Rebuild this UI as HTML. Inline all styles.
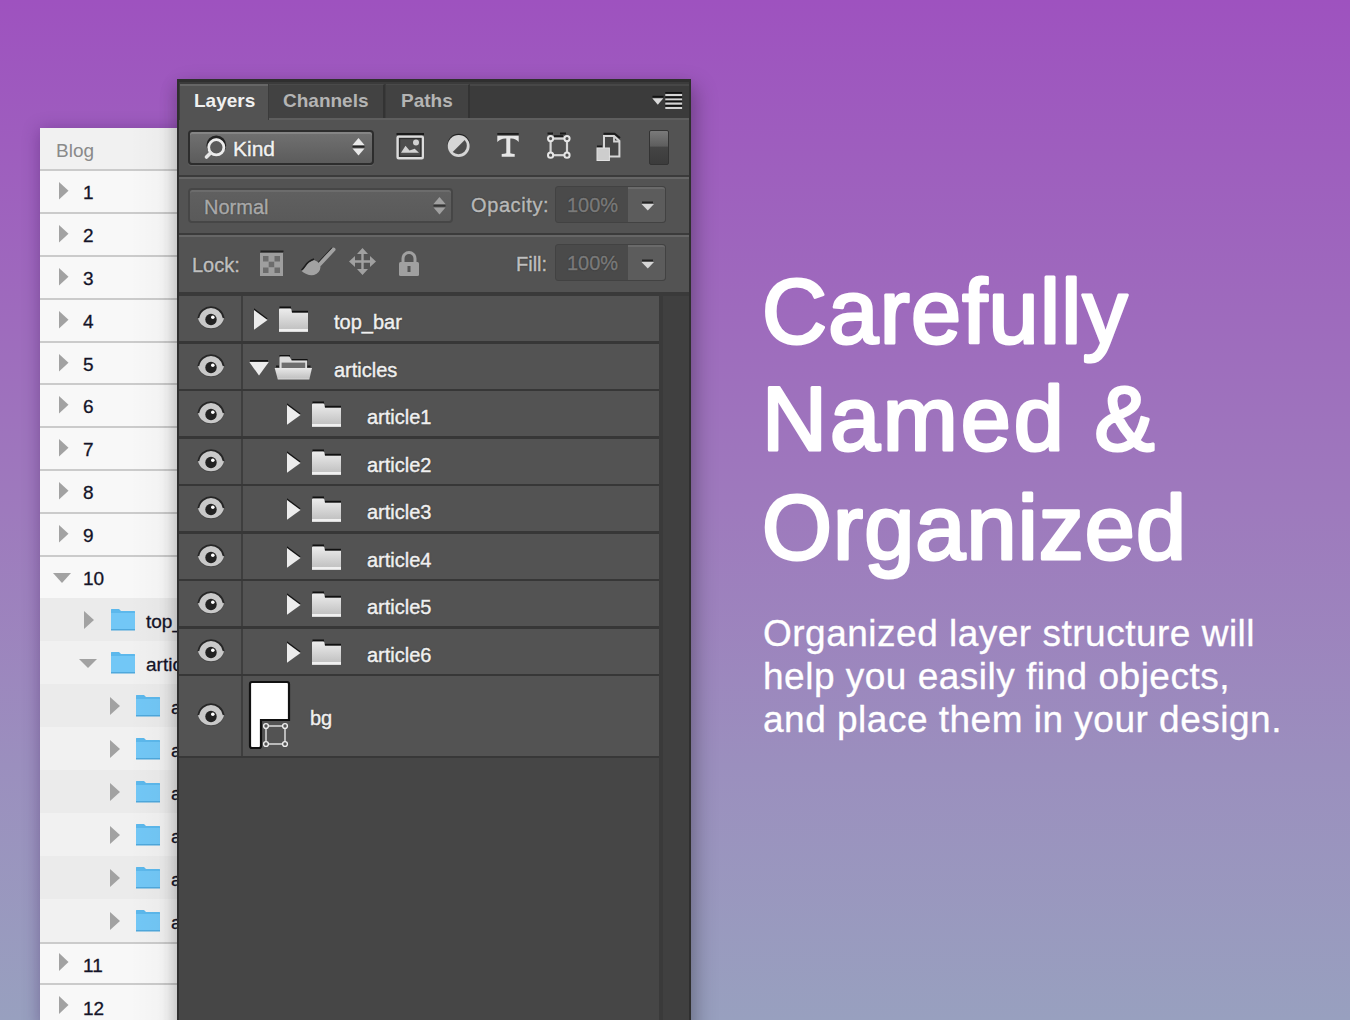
<!DOCTYPE html><html><head><meta charset="utf-8"><style>
*{margin:0;padding:0;box-sizing:border-box}
html,body{width:1350px;height:1020px;overflow:hidden}
body{position:relative;font-family:"Liberation Sans",sans-serif;
background:linear-gradient(to bottom,#9e52bf 0%,#9e6abd 30%,#9e7abd 50%,#9b8fbe 75%,#98a0bf 100%)}
div,span{position:absolute}
svg{position:absolute;overflow:visible}
.t{white-space:nowrap;line-height:1}
.pt{-webkit-text-stroke:0.45px currentColor;text-shadow:0 0 1.5px rgba(0,0,0,.7)}
</style></head><body>
<div style="left:40px;top:128px;width:150px;height:900px;background:#f8f8f8;box-shadow:0 2px 16px rgba(50,10,80,.35)"></div>
<div style="left:40px;top:128px;width:150px;height:41px;background:#f1f1f1"></div>
<span class="t" style="left:56px;top:141px;font-size:19px;color:#8a8a8a">Blog</span>
<div style="left:40px;top:169px;width:150px;height:2px;background:#cbcbcb"></div>
<svg style="left:59px;top:182px" width="9.5" height="17.5"><path d="M0 0L9.5 8.75L0 17.5Z" fill="#a2a2a2"/></svg>
<span class="t" style="left:83px;top:183px;font-size:19px;color:#141428;-webkit-text-stroke:0.3px #141428">1</span>
<div style="left:40px;top:212px;width:150px;height:2px;background:#cbcbcb"></div>
<svg style="left:59px;top:225px" width="9.5" height="17.5"><path d="M0 0L9.5 8.75L0 17.5Z" fill="#a2a2a2"/></svg>
<span class="t" style="left:83px;top:226px;font-size:19px;color:#141428;-webkit-text-stroke:0.3px #141428">2</span>
<div style="left:40px;top:255px;width:150px;height:2px;background:#cbcbcb"></div>
<svg style="left:59px;top:268px" width="9.5" height="17.5"><path d="M0 0L9.5 8.75L0 17.5Z" fill="#a2a2a2"/></svg>
<span class="t" style="left:83px;top:269px;font-size:19px;color:#141428;-webkit-text-stroke:0.3px #141428">3</span>
<div style="left:40px;top:298px;width:150px;height:2px;background:#cbcbcb"></div>
<svg style="left:59px;top:311px" width="9.5" height="17.5"><path d="M0 0L9.5 8.75L0 17.5Z" fill="#a2a2a2"/></svg>
<span class="t" style="left:83px;top:312px;font-size:19px;color:#141428;-webkit-text-stroke:0.3px #141428">4</span>
<div style="left:40px;top:341px;width:150px;height:2px;background:#cbcbcb"></div>
<svg style="left:59px;top:354px" width="9.5" height="17.5"><path d="M0 0L9.5 8.75L0 17.5Z" fill="#a2a2a2"/></svg>
<span class="t" style="left:83px;top:355px;font-size:19px;color:#141428;-webkit-text-stroke:0.3px #141428">5</span>
<div style="left:40px;top:383px;width:150px;height:2px;background:#cbcbcb"></div>
<svg style="left:59px;top:396px" width="9.5" height="17.5"><path d="M0 0L9.5 8.75L0 17.5Z" fill="#a2a2a2"/></svg>
<span class="t" style="left:83px;top:397px;font-size:19px;color:#141428;-webkit-text-stroke:0.3px #141428">6</span>
<div style="left:40px;top:426px;width:150px;height:2px;background:#cbcbcb"></div>
<svg style="left:59px;top:439px" width="9.5" height="17.5"><path d="M0 0L9.5 8.75L0 17.5Z" fill="#a2a2a2"/></svg>
<span class="t" style="left:83px;top:440px;font-size:19px;color:#141428;-webkit-text-stroke:0.3px #141428">7</span>
<div style="left:40px;top:469px;width:150px;height:2px;background:#cbcbcb"></div>
<svg style="left:59px;top:482px" width="9.5" height="17.5"><path d="M0 0L9.5 8.75L0 17.5Z" fill="#a2a2a2"/></svg>
<span class="t" style="left:83px;top:483px;font-size:19px;color:#141428;-webkit-text-stroke:0.3px #141428">8</span>
<div style="left:40px;top:512px;width:150px;height:2px;background:#cbcbcb"></div>
<svg style="left:59px;top:525px" width="9.5" height="17.5"><path d="M0 0L9.5 8.75L0 17.5Z" fill="#a2a2a2"/></svg>
<span class="t" style="left:83px;top:526px;font-size:19px;color:#141428;-webkit-text-stroke:0.3px #141428">9</span>
<div style="left:40px;top:555px;width:150px;height:2px;background:#cbcbcb"></div>
<svg style="left:53px;top:573px" width="18" height="10"><path d="M0 0L18 0L9.0 10Z" fill="#a2a2a2"/></svg>
<span class="t" style="left:83px;top:569px;font-size:19px;color:#141428;-webkit-text-stroke:0.3px #141428">10</span>
<div style="left:40px;top:598px;width:150px;height:43px;background:#ebebeb"></div>
<svg style="left:84px;top:611px" width="10" height="18"><path d="M0 0L10 9.0L0 18Z" fill="#a2a2a2"/></svg>
<svg style="left:110px;top:608px" width="26" height="23" viewBox="0 0 26 23"><path d="M1 1.5Q1 1 1.5 1H9L11 3H24.5Q25 3 25 3.5V22H1Z" fill="#5cb8ec"/><path d="M1 5H25V21.5Q25 22 24.5 22H1.5Q1 22 1 21.5Z" fill="#72c7f6"/><rect x="1" y="21" width="24" height="1.5" fill="#4fa8dc"/></svg>
<span class="t" style="left:146px;top:612px;font-size:19px;color:#141428;-webkit-text-stroke:0.3px #141428">top_</span>
<div style="left:40px;top:641px;width:150px;height:43px;background:#f1f1f1"></div>
<svg style="left:79px;top:659px" width="18" height="9"><path d="M0 0L18 0L9.0 9Z" fill="#a2a2a2"/></svg>
<svg style="left:110px;top:651px" width="26" height="23" viewBox="0 0 26 23"><path d="M1 1.5Q1 1 1.5 1H9L11 3H24.5Q25 3 25 3.5V22H1Z" fill="#5cb8ec"/><path d="M1 5H25V21.5Q25 22 24.5 22H1.5Q1 22 1 21.5Z" fill="#72c7f6"/><rect x="1" y="21" width="24" height="1.5" fill="#4fa8dc"/></svg>
<span class="t" style="left:146px;top:655px;font-size:19px;color:#141428;-webkit-text-stroke:0.3px #141428">artic</span>
<div style="left:40px;top:684px;width:150px;height:43px;background:#ebebeb"></div>
<svg style="left:110px;top:697px" width="10" height="18"><path d="M0 0L10 9.0L0 18Z" fill="#a2a2a2"/></svg>
<svg style="left:135px;top:694px" width="26" height="23" viewBox="0 0 26 23"><path d="M1 1.5Q1 1 1.5 1H9L11 3H24.5Q25 3 25 3.5V22H1Z" fill="#5cb8ec"/><path d="M1 5H25V21.5Q25 22 24.5 22H1.5Q1 22 1 21.5Z" fill="#72c7f6"/><rect x="1" y="21" width="24" height="1.5" fill="#4fa8dc"/></svg>
<span class="t" style="left:171px;top:698px;font-size:19px;color:#141428;-webkit-text-stroke:0.3px #141428">a</span>
<div style="left:40px;top:727px;width:150px;height:43px;background:#f1f1f1"></div>
<svg style="left:110px;top:740px" width="10" height="18"><path d="M0 0L10 9.0L0 18Z" fill="#a2a2a2"/></svg>
<svg style="left:135px;top:737px" width="26" height="23" viewBox="0 0 26 23"><path d="M1 1.5Q1 1 1.5 1H9L11 3H24.5Q25 3 25 3.5V22H1Z" fill="#5cb8ec"/><path d="M1 5H25V21.5Q25 22 24.5 22H1.5Q1 22 1 21.5Z" fill="#72c7f6"/><rect x="1" y="21" width="24" height="1.5" fill="#4fa8dc"/></svg>
<span class="t" style="left:171px;top:741px;font-size:19px;color:#141428;-webkit-text-stroke:0.3px #141428">a</span>
<div style="left:40px;top:770px;width:150px;height:43px;background:#ebebeb"></div>
<svg style="left:110px;top:783px" width="10" height="18"><path d="M0 0L10 9.0L0 18Z" fill="#a2a2a2"/></svg>
<svg style="left:135px;top:780px" width="26" height="23" viewBox="0 0 26 23"><path d="M1 1.5Q1 1 1.5 1H9L11 3H24.5Q25 3 25 3.5V22H1Z" fill="#5cb8ec"/><path d="M1 5H25V21.5Q25 22 24.5 22H1.5Q1 22 1 21.5Z" fill="#72c7f6"/><rect x="1" y="21" width="24" height="1.5" fill="#4fa8dc"/></svg>
<span class="t" style="left:171px;top:784px;font-size:19px;color:#141428;-webkit-text-stroke:0.3px #141428">a</span>
<div style="left:40px;top:813px;width:150px;height:43px;background:#f1f1f1"></div>
<svg style="left:110px;top:826px" width="10" height="18"><path d="M0 0L10 9.0L0 18Z" fill="#a2a2a2"/></svg>
<svg style="left:135px;top:823px" width="26" height="23" viewBox="0 0 26 23"><path d="M1 1.5Q1 1 1.5 1H9L11 3H24.5Q25 3 25 3.5V22H1Z" fill="#5cb8ec"/><path d="M1 5H25V21.5Q25 22 24.5 22H1.5Q1 22 1 21.5Z" fill="#72c7f6"/><rect x="1" y="21" width="24" height="1.5" fill="#4fa8dc"/></svg>
<span class="t" style="left:171px;top:827px;font-size:19px;color:#141428;-webkit-text-stroke:0.3px #141428">a</span>
<div style="left:40px;top:856px;width:150px;height:43px;background:#ebebeb"></div>
<svg style="left:110px;top:869px" width="10" height="18"><path d="M0 0L10 9.0L0 18Z" fill="#a2a2a2"/></svg>
<svg style="left:135px;top:866px" width="26" height="23" viewBox="0 0 26 23"><path d="M1 1.5Q1 1 1.5 1H9L11 3H24.5Q25 3 25 3.5V22H1Z" fill="#5cb8ec"/><path d="M1 5H25V21.5Q25 22 24.5 22H1.5Q1 22 1 21.5Z" fill="#72c7f6"/><rect x="1" y="21" width="24" height="1.5" fill="#4fa8dc"/></svg>
<span class="t" style="left:171px;top:870px;font-size:19px;color:#141428;-webkit-text-stroke:0.3px #141428">a</span>
<div style="left:40px;top:899px;width:150px;height:43px;background:#f1f1f1"></div>
<svg style="left:110px;top:912px" width="10" height="18"><path d="M0 0L10 9.0L0 18Z" fill="#a2a2a2"/></svg>
<svg style="left:135px;top:909px" width="26" height="23" viewBox="0 0 26 23"><path d="M1 1.5Q1 1 1.5 1H9L11 3H24.5Q25 3 25 3.5V22H1Z" fill="#5cb8ec"/><path d="M1 5H25V21.5Q25 22 24.5 22H1.5Q1 22 1 21.5Z" fill="#72c7f6"/><rect x="1" y="21" width="24" height="1.5" fill="#4fa8dc"/></svg>
<span class="t" style="left:171px;top:913px;font-size:19px;color:#141428;-webkit-text-stroke:0.3px #141428">a</span>
<div style="left:40px;top:942px;width:150px;height:2px;background:#cbcbcb"></div>
<svg style="left:59px;top:953px" width="9.5" height="18"><path d="M0 0L9.5 9.0L0 18Z" fill="#a2a2a2"/></svg>
<span class="t" style="left:83px;top:956px;font-size:19px;color:#141428;-webkit-text-stroke:0.3px #141428">11</span>
<div style="left:40px;top:983px;width:150px;height:2px;background:#cbcbcb"></div>
<svg style="left:59px;top:996px" width="9.5" height="18"><path d="M0 0L9.5 9.0L0 18Z" fill="#a2a2a2"/></svg>
<span class="t" style="left:83px;top:999px;font-size:19px;color:#141428;-webkit-text-stroke:0.3px #141428">12</span>
<div style="left:130px;top:128px;width:47px;height:900px;background:linear-gradient(to right,rgba(0,0,0,0),rgba(0,0,0,.03))"></div>
<div style="left:177px;top:79px;width:514px;height:960px;background:#2f2f2f;box-shadow:5px 8px 20px rgba(0,0,0,.27),-4px 6px 14px rgba(0,0,0,.1)"></div>
<div style="left:179px;top:82px;width:510px;height:38px;background:#3b3b3b"></div>
<div style="left:179px;top:120px;width:510px;height:900px;background:#535353"></div>
<div style="left:180px;top:84px;width:88px;height:37px;background:#535353;border-top:2px solid #666"></div>
<div style="left:269px;top:84px;width:116px;height:34px;background:#424242;border-top:1px solid #4a4a4a;border-right:2px solid #333"></div>
<div style="left:386px;top:84px;width:84px;height:34px;background:#424242;border-top:1px solid #4a4a4a;border-right:2px solid #333"></div>
<div style="left:269px;top:118px;width:420px;height:2px;background:#5e5e5e"></div>
<span class="t" style="left:194px;top:91px;font-size:19px;font-weight:bold;color:#f0f0f0">Layers</span>
<span class="t" style="left:283px;top:91px;font-size:19px;font-weight:bold;color:#b4b4b4">Channels</span>
<span class="t" style="left:401px;top:91px;font-size:19px;font-weight:bold;color:#b4b4b4">Paths</span>
<div style="left:470px;top:84px;width:219px;height:2px;background:#474747"></div>
<svg style="left:650px;top:90px" width="36" height="22" viewBox="0 0 36 22"><rect x="2.5" y="5.8" width="11" height="1.7" fill="#111"/><path d="M2.3 8.3H13.3L7.8 14.8Z" fill="#dadada"/><rect x="15.3" y="2" width="16.8" height="1.6" fill="#111"/><rect x="15.3" y="4" width="16.8" height="2" fill="#d4d4d4"/><rect x="15.3" y="6.5" width="16.8" height="1.6" fill="#111"/><rect x="15.3" y="8.5" width="16.8" height="2" fill="#d4d4d4"/><rect x="15.3" y="10.6" width="16.8" height="1.6" fill="#111"/><rect x="15.3" y="12.6" width="16.8" height="2" fill="#d4d4d4"/><rect x="15.3" y="15" width="16.8" height="1.6" fill="#111"/><rect x="15.3" y="17" width="16.8" height="2" fill="#d4d4d4"/></svg>
<div style="left:179px;top:174.5px;width:510px;height:2px;background:#3b3b3b"></div>
<div style="left:179px;top:176.5px;width:510px;height:2px;background:#666"></div>
<div style="left:179px;top:232.5px;width:510px;height:2px;background:#3b3b3b"></div>
<div style="left:179px;top:234.5px;width:510px;height:2px;background:#666"></div>
<div style="left:188px;top:130px;width:186px;height:35px;border-radius:4px;background:linear-gradient(#717171,#5c5c5c);border:2px solid #2d2d2d;box-shadow:0 1px 0 #666,inset 0 2px 0 #858585"></div>
<svg style="left:200px;top:132px" width="30" height="30" viewBox="0 0 30 30"><circle cx="16.3" cy="14.3" r="8.6" fill="none" stroke="#222" stroke-width="2.6" transform="translate(0,-1)"/><circle cx="16.3" cy="15.3" r="7.6" fill="#5a5a5a" stroke="#ececec" stroke-width="2.8"/><path d="M10.5 21L6.5 25" stroke="#e6e6e6" stroke-width="3.6" stroke-linecap="round"/></svg>
<span class="t pt" style="left:233px;top:137.5px;font-size:21px;color:#f2f2f2">Kind</span>
<svg style="left:352px;top:137px" width="13" height="20"><path d="M6.5 1L12.5 8H0.5Z" fill="#e8e8e8"/><rect x="0.5" y="9" width="12" height="1.6" fill="#222"/><path d="M0.5 11.5H12.5L6.5 18.5Z" fill="#e8e8e8"/></svg>
<svg style="left:390px;top:128px" width="40" height="36" viewBox="0 0 40 36"><rect x="6.5" y="5" width="27.5" height="2" fill="#1a1a1a"/><rect x="7.6" y="8.6" width="25.2" height="21.6" rx="1" fill="#4e4e4e" stroke="#dcdcdc" stroke-width="2.4"/><rect x="9.6" y="10.6" width="21.2" height="17.6" fill="none" stroke="#2e2e2e" stroke-width="1.2"/><path d="M11 24.7L15.5 17.7L19.5 22.5L24.7 20.8L29 24.7Z" fill="#d2d2d2"/><circle cx="26" cy="14.5" r="3" fill="#d2d2d2"/></svg>
<svg style="left:440px;top:128px" width="40" height="36" viewBox="0 0 40 36"><circle cx="18.7" cy="17" r="11.2" fill="#222"/><circle cx="18.7" cy="18" r="11" fill="#d6d6d6"/><path d="M24.7 12L12.7 24A8.5 8.5 0 0 0 24.7 12Z" fill="#4e4e4e"/></svg>
<svg style="left:497px;top:133px" width="23" height="25" viewBox="0 0 23 25"><rect x="0.3" y="0" width="21.4" height="1.8" fill="#1a1a1a"/><path d="M0.3 2.7H21.7V9Q18.5 5 13.3 5.5V20.3Q15 20.8 17.7 21V23.7H4.7V21Q7.5 20.8 9.3 20.3V5.5Q4 5 0.3 9Z" fill="#e6e6e6"/></svg>
<svg style="left:540px;top:128px" width="40" height="36" viewBox="0 0 40 36"><path d="M7.5 5.5H13M20 5.5H26" stroke="#1a1a1a" stroke-width="2"/><rect x="14" y="7.2" width="9" height="1.8" fill="#1a1a1a"/><rect x="10.6" y="10.6" width="16.4" height="16.6" fill="none" stroke="#d6d6d6" stroke-width="2.2"/><circle cx="10.6" cy="10.6" r="2.6" fill="#505050" stroke="#e6e6e6" stroke-width="2"/><circle cx="27" cy="10.6" r="2.6" fill="#505050" stroke="#e6e6e6" stroke-width="2"/><circle cx="10.6" cy="27.2" r="2.6" fill="#505050" stroke="#e6e6e6" stroke-width="2"/><circle cx="27" cy="27.2" r="2.6" fill="#505050" stroke="#e6e6e6" stroke-width="2"/></svg>
<svg style="left:590px;top:128px" width="40" height="36" viewBox="0 0 40 36"><path d="M13.5 5.7H24.5L30 10" stroke="#1a1a1a" stroke-width="2" fill="none"/><rect x="7" y="17.5" width="5" height="2" fill="#1a1a1a"/><path d="M14 8H24L29.4 13V28.5H14Z" fill="#474747" stroke="#d6d6d6" stroke-width="2"/><path d="M24 8.5V13.5H29" fill="none" stroke="#d6d6d6" stroke-width="1.8"/><rect x="7" y="20" width="12.4" height="12.5" fill="#cdcdcd" stroke="#e2e2e2" stroke-width="1"/></svg>
<div style="left:649px;top:130px;width:20px;height:35px;background:linear-gradient(#7a7a7a 0%,#5e5e5e 45%,#444 50%,#3c3c3c 100%);border:1px solid #333;border-radius:2px"></div>
<div style="left:188px;top:188px;width:265px;height:35px;border-radius:4px;background:linear-gradient(#606060,#5a5a5a);border:2px solid #464646;box-shadow:inset 0 2px 0 #6c6c6c"></div>
<span class="t pt" style="left:204px;top:197px;font-size:20px;color:#a9a9a9">Normal</span>
<svg style="left:433px;top:196px" width="13" height="20"><path d="M6.5 1L12.5 8H0.5Z" fill="#a0a0a0"/><rect x="0.5" y="9" width="12" height="1.6" fill="#333"/><path d="M0.5 11.5H12.5L6.5 18.5Z" fill="#a0a0a0"/></svg>
<span class="t pt" style="left:471px;top:195px;font-size:20px;color:#b8b8b8;letter-spacing:0.6px">Opacity:</span>
<div style="left:555px;top:186px;width:111px;height:37px;border-radius:3px;background:#4a4a4a;border:1px solid #424242"></div>
<div style="left:628px;top:187px;width:37px;height:35px;border-radius:0 3px 3px 0;background:#5c5c5c;border-top:2px solid #6a6a6a"></div>
<span class="t pt" style="left:567px;top:195px;font-size:20px;color:#7a7a7a">100%</span>
<svg style="left:641px;top:200.5px" width="14" height="13"><rect x="1" y="0.5" width="11" height="1.6" fill="#222"/><path d="M0.5 3H13L6.8 9.5Z" fill="#d6d6d6"/></svg>
<span class="t pt" style="left:192px;top:255px;font-size:20px;color:#bfbfbf">Lock:</span>
<div style="left:555px;top:244px;width:111px;height:37px;border-radius:3px;background:#4a4a4a;border:1px solid #424242"></div>
<div style="left:628px;top:245px;width:37px;height:35px;border-radius:0 3px 3px 0;background:#5c5c5c;border-top:2px solid #6a6a6a"></div>
<span class="t pt" style="left:567px;top:253px;font-size:20px;color:#7a7a7a">100%</span>
<svg style="left:641px;top:258.5px" width="14" height="13"><rect x="1" y="0.5" width="11" height="1.6" fill="#222"/><path d="M0.5 3H13L6.8 9.5Z" fill="#d6d6d6"/></svg>
<span class="t pt" style="left:516px;top:254px;font-size:20px;color:#bfbfbf">Fill:</span>
<svg style="left:260px;top:250px" width="24" height="27" viewBox="0 0 24 27"><rect x="0.5" y="0.5" width="23" height="1.6" fill="#222"/><rect x="0" y="3" width="23" height="23" fill="#9e9e9e"/><rect x="3" y="6" width="5.5" height="5.5" fill="#6c6c6c"/><rect x="14.5" y="6" width="5.5" height="5.5" fill="#6c6c6c"/><rect x="8.7" y="11.7" width="5.5" height="5.5" fill="#6c6c6c"/><rect x="3" y="17.5" width="5.5" height="5.5" fill="#6c6c6c"/><rect x="14.5" y="17.5" width="5.5" height="5.5" fill="#6c6c6c"/></svg>
<svg style="left:301px;top:247px" width="35" height="29" viewBox="0 0 35 29"><path d="M32.5 2.5L18.5 17.5" stroke="#1e1e1e" stroke-width="2" transform="translate(-1.2,-1.2)"/><path d="M32.5 2.5L18.5 17.5" stroke="#a2a2a2" stroke-width="4" stroke-linecap="round"/><path d="M13 13Q7 15 4 20Q2 23 0.5 24Q6 29 13 28Q19 26 19.5 20Q19 15 13 13Z" fill="#a2a2a2"/><path d="M13 13Q7 15 4 20Q2 23 0.5 24" fill="none" stroke="#1e1e1e" stroke-width="1.5" transform="translate(0,-1)"/></svg>
<svg style="left:348px;top:247px" width="29" height="29" viewBox="0 0 29 29"><path d="M14.5 1L20 7H9ZM14.5 28L20 22H9ZM1 14.5L7 9V20ZM28 14.5L22 9V20Z" fill="#a0a0a0"/><path d="M14.5 5V24M5 14.5H24" stroke="#a0a0a0" stroke-width="2.4"/></svg>
<svg style="left:398px;top:251px" width="22" height="25" viewBox="0 0 22 25"><path d="M5 11V7.5A6 6 0 0 1 17 7.5V11" fill="none" stroke="#a0a0a0" stroke-width="3"/><rect x="1" y="11" width="20" height="14" rx="1.5" fill="#a0a0a0"/><rect x="9.5" y="15" width="3" height="6" fill="#555"/></svg>
<div style="left:179px;top:292px;width:510px;height:4px;background:#3a3a3a"></div>
<div style="left:179px;top:296px;width:480px;height:730px;background:#464646"></div>
<div style="left:179px;top:296px;width:480px;height:462px;background:#373737"></div>
<div style="left:659px;top:296px;width:30px;height:730px;background:#404040;border-left:4px solid #3a3a3a"></div>
<div style="left:179px;top:296.0px;width:480px;height:45px;background:#535353"></div>
<div style="left:241px;top:296.0px;width:2px;height:45px;background:#3e3e3e"></div>
<svg style="left:197px;top:306.0px" width="28" height="25" viewBox="0 0 28 25"><path d="M1 13.5C4 1 24 1 27 13.5C23.5 26.5 4.5 26.5 1 13.5Z" fill="#2a2a2a" opacity=".3"/><path d="M1 12.5C3.5 -2.5 24.5 -2.5 27 12.5C23.5 25.5 4.5 25.5 1 12.5Z" fill="#c9c9c9"/><path d="M1.3 12.2C3.8 -2.5 24.2 -2.5 26.7 12.2" fill="none" stroke="#262626" stroke-width="1.8"/><circle cx="14" cy="13.5" r="5.7" fill="#222"/><circle cx="15.8" cy="11.2" r="1.8" fill="#fff"/></svg>
<svg style="left:253px;top:307.0px" width="16" height="24" viewBox="0 0 16 24"><path d="M1 1.2L14.6 11.4L1 21.6Z" fill="#151515"/><path d="M1 3L14.5 12.9L1 22.8Z" fill="#ececec"/></svg>
<svg style="left:278px;top:306.0px" width="31" height="27" viewBox="0 0 31 27"><defs><linearGradient id="fg" x1="0" y1="0" x2="0" y2="1"><stop offset="0" stop-color="#ededed"/><stop offset=".8" stop-color="#c6c6c6"/><stop offset="1" stop-color="#c0c0c0"/></linearGradient></defs><rect x="1.5" y="0.5" width="11.5" height="2" fill="#111"/><rect x="13" y="4.8" width="17" height="2" fill="#111"/><path d="M1 3.5Q1 2.4 2.2 2.4H12Q13 2.4 13.4 3.6L14 6.7H30V25.7H1Z" fill="url(#fg)"/><rect x="1" y="23" width="29" height="2.7" fill="#f0f0f0"/></svg>
<span class="t pt" style="left:334px;top:312.0px;font-size:20px;color:#f0f0f0">top_bar</span>
<div style="left:179px;top:343.5px;width:480px;height:45px;background:#535353"></div>
<div style="left:241px;top:343.5px;width:2px;height:45px;background:#3e3e3e"></div>
<svg style="left:197px;top:353.5px" width="28" height="25" viewBox="0 0 28 25"><path d="M1 13.5C4 1 24 1 27 13.5C23.5 26.5 4.5 26.5 1 13.5Z" fill="#2a2a2a" opacity=".3"/><path d="M1 12.5C3.5 -2.5 24.5 -2.5 27 12.5C23.5 25.5 4.5 25.5 1 12.5Z" fill="#c9c9c9"/><path d="M1.3 12.2C3.8 -2.5 24.2 -2.5 26.7 12.2" fill="none" stroke="#262626" stroke-width="1.8"/><circle cx="14" cy="13.5" r="5.7" fill="#222"/><circle cx="15.8" cy="11.2" r="1.8" fill="#fff"/></svg>
<svg style="left:249px;top:359.5px" width="20" height="17" viewBox="0 0 20 17"><rect x="1" y="0" width="18" height="1.6" fill="#111"/><path d="M0.3 2H19.8L10 15.6Z" fill="#ececec"/></svg>
<svg style="left:274px;top:353.5px" width="39" height="27" viewBox="0 0 39 27"><defs><linearGradient id="fo" x1="0" y1="0" x2="0" y2="1"><stop offset="0" stop-color="#e8e8e8"/><stop offset=".85" stop-color="#c4c4c4"/><stop offset="1" stop-color="#d8d8d8"/></linearGradient></defs><rect x="5.5" y="1" width="10.5" height="1.6" fill="#111"/><rect x="17.8" y="5" width="15.8" height="1.6" fill="#111"/><path d="M5.5 3.8Q5.5 2.6 6.7 2.6H14.5Q15.6 2.6 16.1 3.6L17.6 6.6H33V14H5.5Z" fill="#dcdcdc"/><rect x="7.6" y="8.6" width="23.6" height="5.6" fill="#6e6e6e"/><rect x="2" y="11.5" width="3" height="1.8" fill="#1a1a1a"/><rect x="33.5" y="11.5" width="3" height="1.8" fill="#1a1a1a"/><path d="M0.7 14H38L35.3 25.4H3.8Z" fill="url(#fo)"/></svg>
<span class="t pt" style="left:334px;top:359.5px;font-size:20px;color:#f0f0f0">articles</span>
<div style="left:179px;top:391.0px;width:480px;height:45px;background:#535353"></div>
<div style="left:241px;top:391.0px;width:2px;height:45px;background:#3e3e3e"></div>
<svg style="left:197px;top:401.0px" width="28" height="25" viewBox="0 0 28 25"><path d="M1 13.5C4 1 24 1 27 13.5C23.5 26.5 4.5 26.5 1 13.5Z" fill="#2a2a2a" opacity=".3"/><path d="M1 12.5C3.5 -2.5 24.5 -2.5 27 12.5C23.5 25.5 4.5 25.5 1 12.5Z" fill="#c9c9c9"/><path d="M1.3 12.2C3.8 -2.5 24.2 -2.5 26.7 12.2" fill="none" stroke="#262626" stroke-width="1.8"/><circle cx="14" cy="13.5" r="5.7" fill="#222"/><circle cx="15.8" cy="11.2" r="1.8" fill="#fff"/></svg>
<svg style="left:286px;top:402.0px" width="16" height="24" viewBox="0 0 16 24"><path d="M1 1.2L14.6 11.4L1 21.6Z" fill="#151515"/><path d="M1 3L14.5 12.9L1 22.8Z" fill="#ececec"/></svg>
<svg style="left:311px;top:401.0px" width="31" height="27" viewBox="0 0 31 27"><defs><linearGradient id="fg" x1="0" y1="0" x2="0" y2="1"><stop offset="0" stop-color="#ededed"/><stop offset=".8" stop-color="#c6c6c6"/><stop offset="1" stop-color="#c0c0c0"/></linearGradient></defs><rect x="1.5" y="0.5" width="11.5" height="2" fill="#111"/><rect x="13" y="4.8" width="17" height="2" fill="#111"/><path d="M1 3.5Q1 2.4 2.2 2.4H12Q13 2.4 13.4 3.6L14 6.7H30V25.7H1Z" fill="url(#fg)"/><rect x="1" y="23" width="29" height="2.7" fill="#f0f0f0"/></svg>
<span class="t pt" style="left:367px;top:407.0px;font-size:20px;color:#f0f0f0">article1</span>
<div style="left:179px;top:438.5px;width:480px;height:45px;background:#535353"></div>
<div style="left:241px;top:438.5px;width:2px;height:45px;background:#3e3e3e"></div>
<svg style="left:197px;top:448.5px" width="28" height="25" viewBox="0 0 28 25"><path d="M1 13.5C4 1 24 1 27 13.5C23.5 26.5 4.5 26.5 1 13.5Z" fill="#2a2a2a" opacity=".3"/><path d="M1 12.5C3.5 -2.5 24.5 -2.5 27 12.5C23.5 25.5 4.5 25.5 1 12.5Z" fill="#c9c9c9"/><path d="M1.3 12.2C3.8 -2.5 24.2 -2.5 26.7 12.2" fill="none" stroke="#262626" stroke-width="1.8"/><circle cx="14" cy="13.5" r="5.7" fill="#222"/><circle cx="15.8" cy="11.2" r="1.8" fill="#fff"/></svg>
<svg style="left:286px;top:449.5px" width="16" height="24" viewBox="0 0 16 24"><path d="M1 1.2L14.6 11.4L1 21.6Z" fill="#151515"/><path d="M1 3L14.5 12.9L1 22.8Z" fill="#ececec"/></svg>
<svg style="left:311px;top:448.5px" width="31" height="27" viewBox="0 0 31 27"><defs><linearGradient id="fg" x1="0" y1="0" x2="0" y2="1"><stop offset="0" stop-color="#ededed"/><stop offset=".8" stop-color="#c6c6c6"/><stop offset="1" stop-color="#c0c0c0"/></linearGradient></defs><rect x="1.5" y="0.5" width="11.5" height="2" fill="#111"/><rect x="13" y="4.8" width="17" height="2" fill="#111"/><path d="M1 3.5Q1 2.4 2.2 2.4H12Q13 2.4 13.4 3.6L14 6.7H30V25.7H1Z" fill="url(#fg)"/><rect x="1" y="23" width="29" height="2.7" fill="#f0f0f0"/></svg>
<span class="t pt" style="left:367px;top:454.5px;font-size:20px;color:#f0f0f0">article2</span>
<div style="left:179px;top:486.0px;width:480px;height:45px;background:#535353"></div>
<div style="left:241px;top:486.0px;width:2px;height:45px;background:#3e3e3e"></div>
<svg style="left:197px;top:496.0px" width="28" height="25" viewBox="0 0 28 25"><path d="M1 13.5C4 1 24 1 27 13.5C23.5 26.5 4.5 26.5 1 13.5Z" fill="#2a2a2a" opacity=".3"/><path d="M1 12.5C3.5 -2.5 24.5 -2.5 27 12.5C23.5 25.5 4.5 25.5 1 12.5Z" fill="#c9c9c9"/><path d="M1.3 12.2C3.8 -2.5 24.2 -2.5 26.7 12.2" fill="none" stroke="#262626" stroke-width="1.8"/><circle cx="14" cy="13.5" r="5.7" fill="#222"/><circle cx="15.8" cy="11.2" r="1.8" fill="#fff"/></svg>
<svg style="left:286px;top:497.0px" width="16" height="24" viewBox="0 0 16 24"><path d="M1 1.2L14.6 11.4L1 21.6Z" fill="#151515"/><path d="M1 3L14.5 12.9L1 22.8Z" fill="#ececec"/></svg>
<svg style="left:311px;top:496.0px" width="31" height="27" viewBox="0 0 31 27"><defs><linearGradient id="fg" x1="0" y1="0" x2="0" y2="1"><stop offset="0" stop-color="#ededed"/><stop offset=".8" stop-color="#c6c6c6"/><stop offset="1" stop-color="#c0c0c0"/></linearGradient></defs><rect x="1.5" y="0.5" width="11.5" height="2" fill="#111"/><rect x="13" y="4.8" width="17" height="2" fill="#111"/><path d="M1 3.5Q1 2.4 2.2 2.4H12Q13 2.4 13.4 3.6L14 6.7H30V25.7H1Z" fill="url(#fg)"/><rect x="1" y="23" width="29" height="2.7" fill="#f0f0f0"/></svg>
<span class="t pt" style="left:367px;top:502.0px;font-size:20px;color:#f0f0f0">article3</span>
<div style="left:179px;top:533.5px;width:480px;height:45px;background:#535353"></div>
<div style="left:241px;top:533.5px;width:2px;height:45px;background:#3e3e3e"></div>
<svg style="left:197px;top:543.5px" width="28" height="25" viewBox="0 0 28 25"><path d="M1 13.5C4 1 24 1 27 13.5C23.5 26.5 4.5 26.5 1 13.5Z" fill="#2a2a2a" opacity=".3"/><path d="M1 12.5C3.5 -2.5 24.5 -2.5 27 12.5C23.5 25.5 4.5 25.5 1 12.5Z" fill="#c9c9c9"/><path d="M1.3 12.2C3.8 -2.5 24.2 -2.5 26.7 12.2" fill="none" stroke="#262626" stroke-width="1.8"/><circle cx="14" cy="13.5" r="5.7" fill="#222"/><circle cx="15.8" cy="11.2" r="1.8" fill="#fff"/></svg>
<svg style="left:286px;top:544.5px" width="16" height="24" viewBox="0 0 16 24"><path d="M1 1.2L14.6 11.4L1 21.6Z" fill="#151515"/><path d="M1 3L14.5 12.9L1 22.8Z" fill="#ececec"/></svg>
<svg style="left:311px;top:543.5px" width="31" height="27" viewBox="0 0 31 27"><defs><linearGradient id="fg" x1="0" y1="0" x2="0" y2="1"><stop offset="0" stop-color="#ededed"/><stop offset=".8" stop-color="#c6c6c6"/><stop offset="1" stop-color="#c0c0c0"/></linearGradient></defs><rect x="1.5" y="0.5" width="11.5" height="2" fill="#111"/><rect x="13" y="4.8" width="17" height="2" fill="#111"/><path d="M1 3.5Q1 2.4 2.2 2.4H12Q13 2.4 13.4 3.6L14 6.7H30V25.7H1Z" fill="url(#fg)"/><rect x="1" y="23" width="29" height="2.7" fill="#f0f0f0"/></svg>
<span class="t pt" style="left:367px;top:549.5px;font-size:20px;color:#f0f0f0">article4</span>
<div style="left:179px;top:581.0px;width:480px;height:45px;background:#535353"></div>
<div style="left:241px;top:581.0px;width:2px;height:45px;background:#3e3e3e"></div>
<svg style="left:197px;top:591.0px" width="28" height="25" viewBox="0 0 28 25"><path d="M1 13.5C4 1 24 1 27 13.5C23.5 26.5 4.5 26.5 1 13.5Z" fill="#2a2a2a" opacity=".3"/><path d="M1 12.5C3.5 -2.5 24.5 -2.5 27 12.5C23.5 25.5 4.5 25.5 1 12.5Z" fill="#c9c9c9"/><path d="M1.3 12.2C3.8 -2.5 24.2 -2.5 26.7 12.2" fill="none" stroke="#262626" stroke-width="1.8"/><circle cx="14" cy="13.5" r="5.7" fill="#222"/><circle cx="15.8" cy="11.2" r="1.8" fill="#fff"/></svg>
<svg style="left:286px;top:592.0px" width="16" height="24" viewBox="0 0 16 24"><path d="M1 1.2L14.6 11.4L1 21.6Z" fill="#151515"/><path d="M1 3L14.5 12.9L1 22.8Z" fill="#ececec"/></svg>
<svg style="left:311px;top:591.0px" width="31" height="27" viewBox="0 0 31 27"><defs><linearGradient id="fg" x1="0" y1="0" x2="0" y2="1"><stop offset="0" stop-color="#ededed"/><stop offset=".8" stop-color="#c6c6c6"/><stop offset="1" stop-color="#c0c0c0"/></linearGradient></defs><rect x="1.5" y="0.5" width="11.5" height="2" fill="#111"/><rect x="13" y="4.8" width="17" height="2" fill="#111"/><path d="M1 3.5Q1 2.4 2.2 2.4H12Q13 2.4 13.4 3.6L14 6.7H30V25.7H1Z" fill="url(#fg)"/><rect x="1" y="23" width="29" height="2.7" fill="#f0f0f0"/></svg>
<span class="t pt" style="left:367px;top:597.0px;font-size:20px;color:#f0f0f0">article5</span>
<div style="left:179px;top:628.5px;width:480px;height:45px;background:#535353"></div>
<div style="left:241px;top:628.5px;width:2px;height:45px;background:#3e3e3e"></div>
<svg style="left:197px;top:638.5px" width="28" height="25" viewBox="0 0 28 25"><path d="M1 13.5C4 1 24 1 27 13.5C23.5 26.5 4.5 26.5 1 13.5Z" fill="#2a2a2a" opacity=".3"/><path d="M1 12.5C3.5 -2.5 24.5 -2.5 27 12.5C23.5 25.5 4.5 25.5 1 12.5Z" fill="#c9c9c9"/><path d="M1.3 12.2C3.8 -2.5 24.2 -2.5 26.7 12.2" fill="none" stroke="#262626" stroke-width="1.8"/><circle cx="14" cy="13.5" r="5.7" fill="#222"/><circle cx="15.8" cy="11.2" r="1.8" fill="#fff"/></svg>
<svg style="left:286px;top:639.5px" width="16" height="24" viewBox="0 0 16 24"><path d="M1 1.2L14.6 11.4L1 21.6Z" fill="#151515"/><path d="M1 3L14.5 12.9L1 22.8Z" fill="#ececec"/></svg>
<svg style="left:311px;top:638.5px" width="31" height="27" viewBox="0 0 31 27"><defs><linearGradient id="fg" x1="0" y1="0" x2="0" y2="1"><stop offset="0" stop-color="#ededed"/><stop offset=".8" stop-color="#c6c6c6"/><stop offset="1" stop-color="#c0c0c0"/></linearGradient></defs><rect x="1.5" y="0.5" width="11.5" height="2" fill="#111"/><rect x="13" y="4.8" width="17" height="2" fill="#111"/><path d="M1 3.5Q1 2.4 2.2 2.4H12Q13 2.4 13.4 3.6L14 6.7H30V25.7H1Z" fill="url(#fg)"/><rect x="1" y="23" width="29" height="2.7" fill="#f0f0f0"/></svg>
<span class="t pt" style="left:367px;top:644.5px;font-size:20px;color:#f0f0f0">article6</span>
<div style="left:179px;top:676px;width:480px;height:80px;background:#535353"></div>
<div style="left:241px;top:676px;width:2px;height:80px;background:#3e3e3e"></div>
<svg style="left:197px;top:703px" width="28" height="25" viewBox="0 0 28 25"><path d="M1 13.5C4 1 24 1 27 13.5C23.5 26.5 4.5 26.5 1 13.5Z" fill="#2a2a2a" opacity=".3"/><path d="M1 12.5C3.5 -2.5 24.5 -2.5 27 12.5C23.5 25.5 4.5 25.5 1 12.5Z" fill="#c9c9c9"/><path d="M1.3 12.2C3.8 -2.5 24.2 -2.5 26.7 12.2" fill="none" stroke="#262626" stroke-width="1.8"/><circle cx="14" cy="13.5" r="5.7" fill="#222"/><circle cx="15.8" cy="11.2" r="1.8" fill="#fff"/></svg>
<svg style="left:249px;top:681px" width="42" height="68" viewBox="0 0 42 68"><path d="M1 3Q1 1 3 1H38Q40 1 40 3V39H12V65Q12 67 10 67H3Q1 67 1 65Z" fill="#fff" stroke="#111" stroke-width="2.2"/><rect x="17" y="45" width="19" height="18" fill="none" stroke="#dcdcdc" stroke-width="1.5"/><circle cx="17" cy="45" r="2.4" fill="#555" stroke="#eee" stroke-width="1.4"/><circle cx="36" cy="45" r="2.4" fill="#555" stroke="#eee" stroke-width="1.4"/><circle cx="17" cy="63" r="2.4" fill="#555" stroke="#eee" stroke-width="1.4"/><circle cx="36" cy="63" r="2.4" fill="#555" stroke="#eee" stroke-width="1.4"/></svg>
<span class="t pt" style="left:310px;top:708px;font-size:20px;color:#f0f0f0">bg</span>
<div style="left:179px;top:756px;width:480px;height:2px;background:#383838"></div>
<svg style="left:0;top:0" width="1350" height="1020"><g font-family="Liberation Sans" font-size="90" fill="#fff" stroke="#fff" stroke-width="3" stroke-linejoin="round"><text x="762" y="342.5" letter-spacing="1.3">Carefully</text><text x="762" y="450" letter-spacing="2.9">Named &amp;</text><text x="762" y="558.5" letter-spacing="1.1">Organized</text></g></svg>
<div class="t" style="left:763px;top:612px;font-size:37px;color:#fff;-webkit-text-stroke:0.3px #fff;line-height:43px;letter-spacing:0.5px;white-space:pre">Organized layer structure will
help you easily find objects,
and place them in your design.</div>
</body></html>
